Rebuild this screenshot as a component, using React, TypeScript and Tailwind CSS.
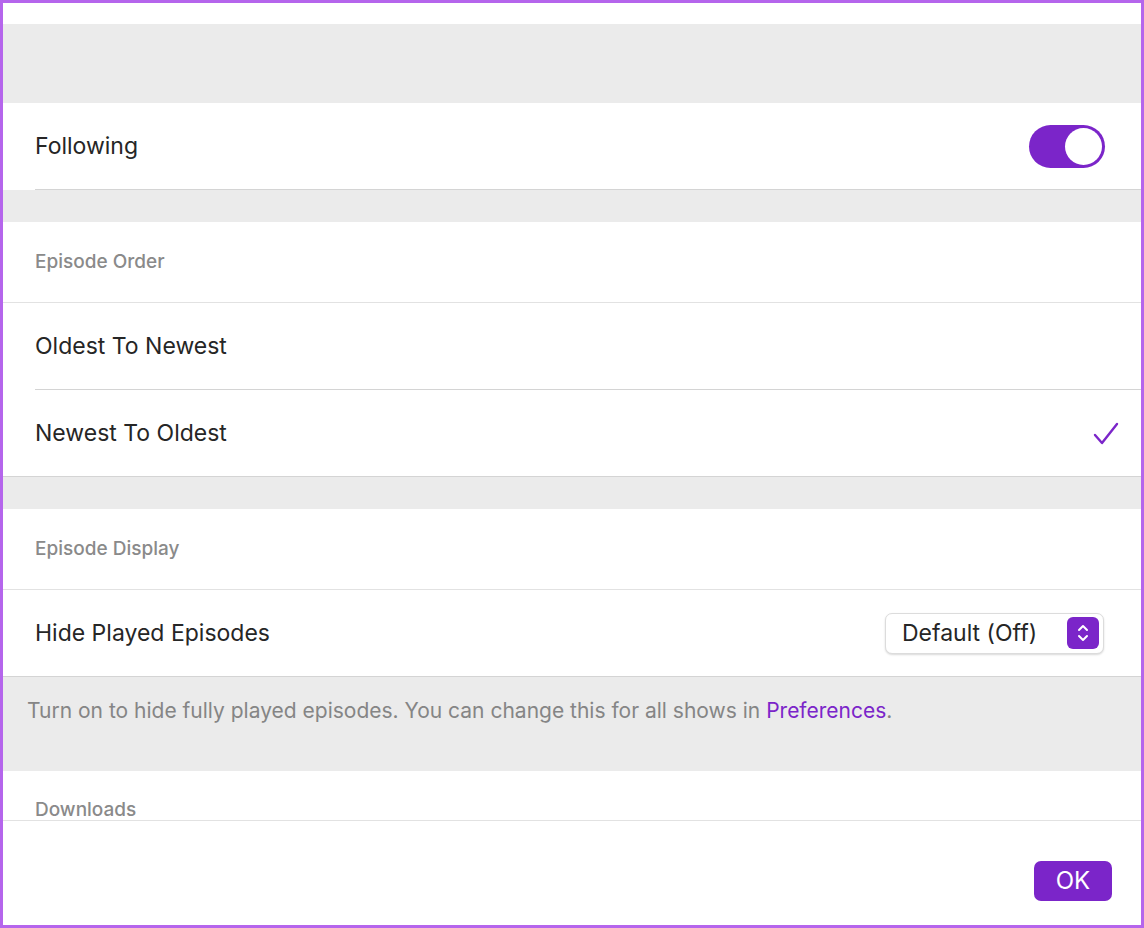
const font = { fontFamily: '"Inter", "Noto Sans", sans-serif' };

function Row({ label, children, line = 'inset' }: { label: string; children?: React.ReactNode; line?: 'inset' | 'full' | 'none' }) {
  return (
    <div className="relative flex h-[87px] items-center justify-between bg-white pl-[32px] pr-[36px]">
      <span className="text-[23px] text-[#262626]">{label}</span>
      {children}
      {line !== 'none' && (
        <div className={`absolute bottom-0 right-0 h-px bg-[#d4d4d4] ${line === 'inset' ? 'left-[32px]' : 'left-0'}`} />
      )}
    </div>
  );
}

function Header({ label }: { label: string }) {
  return (
    <div className="flex h-[81px] items-center border-b border-[#e2e2e2] bg-white pl-[32px]">
      <span className="text-[19px] font-medium text-[#8a8a8a]">{label}</span>
    </div>
  );
}

export default function App() {
  return (
    <div style={font} className="h-[928px] w-[1144px] overflow-hidden border-[3px] border-[#b565ec] bg-white">
      <div className="h-[21px] bg-white" />
      <div className="h-[79px] bg-[#ebebeb]" />
      <Row label="Following">
        <div className="flex h-[43px] w-[76px] items-center justify-end rounded-full bg-[#7b25c9] p-[3px]">
          <div className="h-[37px] w-[37px] rounded-full bg-white" />
        </div>
      </Row>
      <div className="h-[32px] bg-[#ebebeb]" />
      <Header label="Episode Order" />
      <Row label="Oldest To Newest" />
      <Row label="Newest To Oldest" line="full">
        <svg width="26" height="24" viewBox="0 0 26 24" className="mr-[-14px]">
          <path d="M2 13 L9 21 L24 2" fill="none" stroke="#7b25c9" strokeWidth="2.4" strokeLinecap="round" strokeLinejoin="round" />
        </svg>
      </Row>
      <div className="h-[32px] bg-[#ebebeb]" />
      <Header label="Episode Display" />
      <div className="flex h-[87px] items-center justify-between border-b border-[#d4d4d4] bg-white pl-[32px] pr-[37px]">
        <span className="text-[23px] text-[#262626]">Hide Played Episodes</span>
        <div className="flex h-[41px] w-[219px] items-center justify-between rounded-[7px] border border-[#dcdcdc] bg-white pl-[16px] pr-[4px] shadow-[0_1px_2px_rgba(0,0,0,0.15)]">
          <span className="text-[23px] text-[#262626]">Default (Off)</span>
          <div className="flex h-[32px] w-[32px] items-center justify-center rounded-[6px] bg-[#7b25c9]">
            <svg width="14" height="22" viewBox="0 0 14 22">
              <path d="M3 8 L7 4 L11 8 M3 14 L7 18 L11 14" fill="none" stroke="white" strokeWidth="2" strokeLinecap="round" strokeLinejoin="round" />
            </svg>
          </div>
        </div>
      </div>
      <div className="h-[94px] bg-[#ebebeb] pl-[24px] pt-[18px] text-[21px] text-[#858585]">
        Turn on to hide fully played episodes. You can change this for all shows in <span className="text-[#7b25c9]">Preferences</span>.
      </div>
      <div className="flex h-[50px] items-end border-b border-[#e2e2e2] bg-white pb-[-4px] pl-[32px]">
        <span className="translate-y-[4px] text-[19px] font-medium text-[#8a8a8a]">Downloads</span>
      </div>
      <div className="flex justify-end pr-[29px] pt-[40px]">
        <button className="h-[40px] w-[78px] rounded-[7px] bg-[#7b25c9] text-[24px] text-white">OK</button>
      </div>
    </div>
  );
}
